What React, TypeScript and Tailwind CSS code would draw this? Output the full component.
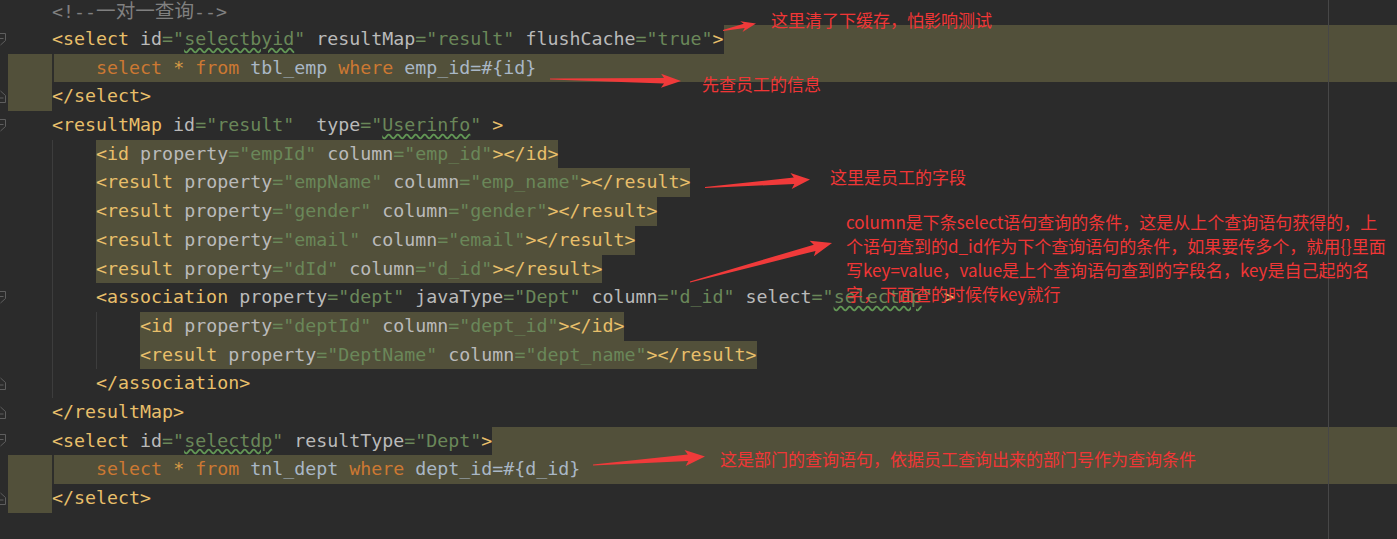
import React from "react";

const TAG = "text-[#e8bf6a]";
const AT = "text-[#bababa]";
const VAL = "text-[#6a8759]";
const KW = "text-[#cc7832]";
const STAR = "text-[#d69a45]";
const TX = "text-[#a9b7c6]";
const CMT = "text-[#808080]";
const HL = "bg-[#52503a]";
const SQ = "underline decoration-wavy decoration-[#629755] underline-offset-[2px]";
const GUIDE = "shadow-[inset_1px_0_0_#3d3d3d]";
const GUIDE_DARK = "shadow-[inset_2px_0_0_#2e2e2b]";

function Fold({ kind }: { kind: "open" | "close" }) {
  return (
    <svg width="8" height="13" viewBox="0 0 8 13" className="block">
      {kind === "open" ? (
        <path d="M0 0.5 H5.5 V7.5 L0.5 12" fill="none" stroke="#5e5e5e" strokeWidth="1" />
      ) : (
        <path d="M0.5 1 L5.5 5.5 V12.5 H0" fill="none" stroke="#5e5e5e" strokeWidth="1" />
      )}
      <path d={kind === "open" ? "M0 5.5 H3.5" : "M0 8 H3.5"} stroke="#5e5e5e" strokeWidth="1" />
    </svg>
  );
}

function Row({
  fold,
  className,
  children,
}: {
  fold?: "open" | "close";
  className?: string;
  children?: React.ReactNode;
}) {
  return (
    <div className="flex h-[28.7px] whitespace-pre">
      <div className="flex w-[8px] shrink-0 items-center">{fold && <Fold kind={fold} />}</div>
      <div className={`flex min-w-0 flex-1 ${className ?? ""}`}>{children}</div>
    </div>
  );
}

function A({ n, v, sq }: { n: string; v: string; sq?: boolean }) {
  return (
    <span>
      <span className={AT}>{n}</span>
      <span className={VAL}>
        ="{sq ? <span className={SQ}>{v}</span> : v}"
      </span>
    </span>
  );
}

const I = () => <span>{"    "}</span>;
const G = () => <span className={GUIDE}>{"    "}</span>;

function ResultLine({ tag, p, c, nested }: { tag: string; p: string; c: string; nested?: boolean }) {
  return (
    <Row>
      <I />
      <G />
      {nested && <G />}
      <span className={HL}>
        <span className={TAG}>{"<" + tag}</span> <A n="property" v={p} /> <A n="column" v={c} />
        <span className={TAG}>{"></" + tag + ">"}</span>
      </span>
    </Row>
  );
}

type P = [number, number];
function arrow(t: P, p: P, h: number, w: number): string {
  const dx = p[0] - t[0];
  const dy = p[1] - t[1];
  const L = Math.hypot(dx, dy);
  const ux = dx / L;
  const uy = dy / L;
  const nx = -uy;
  const ny = ux;
  const s = w * 0.4;
  const bx = p[0] - ux * h;
  const by = p[1] - uy * h;
  const cx = p[0] - ux * (h + 3);
  const cy = p[1] - uy * (h + 3);
  const pts: P[] = [
    [t[0] + nx * 0.5, t[1] + ny * 0.5],
    [bx + nx * s, by + ny * s],
    [cx + nx * w, cy + ny * w],
    [p[0], p[1]],
    [cx - nx * w, cy - ny * w],
    [bx - nx * s, by - ny * s],
    [t[0] - nx * 0.5, t[1] - ny * 0.5],
  ];
  return pts.map((q) => q[0].toFixed(1) + "," + q[1].toFixed(1)).join(" ");
}

const ARROWS: { t: P; p: P; h: number; w: number }[] = [
  { t: [723, 30.5], p: [756, 23.5], h: 12, w: 5.5 },
  { t: [550, 79], p: [681, 81], h: 17, w: 7 },
  { t: [705, 187.5], p: [810, 179.5], h: 16, w: 8 },
  { t: [690, 282], p: [832, 243], h: 18, w: 8 },
  { t: [593, 465], p: [705, 456.5], h: 17, w: 8 },
];

const NOTE =
  "absolute whitespace-nowrap text-[17px] leading-[24px] text-[#f03636] font-['Noto_Sans_CJK_SC','Microsoft_YaHei',sans-serif]";

export default function App() {
  return (
    <div className="relative h-[539px] w-[1397px] overflow-hidden bg-[#2b2b2b]">
      <div className="-mt-[3.7px] font-['DejaVu_Sans_Mono','Noto_Sans_CJK_SC',monospace] text-[18.3px] leading-[28.7px] text-[#a9b7c6]">
        {/* 0 */}
        <Row>
          <I />
          <span className={CMT}>
            {"<!--"}
            <span className="font-['Noto_Sans_CJK_SC',sans-serif] text-[19.6px]">一对一查询</span>
            {"-->"}
          </span>
        </Row>
        {/* 1 */}
        <Row fold="open">
          <I />
          <span className={TAG}>{"<select"}</span>
          <span> </span>
          <A n="id" v="selectbyid" sq />
          <span> </span>
          <A n="resultMap" v="result" />
          <span> </span>
          <A n="flushCache" v="true" />
          <span className={TAG}>{">"}</span>
          <span className={`flex-1 ${HL}`} />
        </Row>
        {/* 2 */}
        <Row className={HL}>
          <I />
          <span className={GUIDE_DARK}>{"    "}</span>
          <span>
            <span className={KW}>select</span> <span className={STAR}>*</span> <span className={KW}>from</span>
            <span className={TX}> tbl_emp </span>
            <span className={KW}>where</span>
            <span className={TX}>{" emp_id=#{id}"}</span>
          </span>
        </Row>
        {/* 3 */}
        <Row fold="close">
          <span className={HL}>{"    "}</span>
          <span className={TAG}>{"</select>"}</span>
        </Row>
        {/* 4 */}
        <Row fold="open">
          <I />
          <span className={TAG}>{"<resultMap"}</span>
          <span> </span>
          <A n="id" v="result" />
          <span>{"  "}</span>
          <A n="type" v="Userinfo" sq />
          <span> </span>
          <span className={TAG}>{">"}</span>
        </Row>
        <ResultLine tag="id" p="empId" c="emp_id" />
        <ResultLine tag="result" p="empName" c="emp_name" />
        <ResultLine tag="result" p="gender" c="gender" />
        <ResultLine tag="result" p="email" c="email" />
        <ResultLine tag="result" p="dId" c="d_id" />
        {/* 10 */}
        <Row fold="open">
          <I />
          <G />
          <span className={TAG}>{"<association"}</span>
          <span> </span>
          <A n="property" v="dept" />
          <span> </span>
          <A n="javaType" v="Dept" />
          <span> </span>
          <A n="column" v="d_id" />
          <span> </span>
          <A n="select" v="selectdp" sq />
          <span> </span>
          <span className={TAG}>{">"}</span>
        </Row>
        <ResultLine tag="id" p="deptId" c="dept_id" nested />
        <ResultLine tag="result" p="DeptName" c="dept_name" nested />
        {/* 13 */}
        <Row fold="close">
          <I />
          <G />
          <span className={TAG}>{"</association>"}</span>
        </Row>
        {/* 14 */}
        <Row fold="close">
          <I />
          <span className={TAG}>{"</resultMap>"}</span>
        </Row>
        {/* 15 */}
        <Row fold="open">
          <I />
          <span className={TAG}>{"<select"}</span>
          <span> </span>
          <A n="id" v="selectdp" sq />
          <span> </span>
          <A n="resultType" v="Dept" />
          <span className={TAG}>{">"}</span>
          <span className={`flex-1 ${HL}`} />
        </Row>
        {/* 16 */}
        <Row className={HL}>
          <I />
          <span className={GUIDE_DARK}>{"    "}</span>
          <span>
            <span className={KW}>select</span> <span className={STAR}>*</span> <span className={KW}>from</span>
            <span className={TX}> tnl_dept </span>
            <span className={KW}>where</span>
            <span className={TX}>{" dept_id=#{d_id}"}</span>
          </span>
        </Row>
        {/* 17 */}
        <Row fold="close">
          <span className={HL}>{"    "}</span>
          <span className={TAG}>{"</select>"}</span>
        </Row>
      </div>

      {/* right margin guide */}
      <div className="absolute left-[1328px] top-0 h-full w-px bg-[#474747]" />

      {/* annotations */}
      <div className={`${NOTE} left-[771px] top-[8px]`}>这里清了下缓存，怕影响测试</div>
      <div className={`${NOTE} left-[702px] top-[72px]`}>先查员工的信息</div>
      <div className={`${NOTE} left-[830px] top-[165px]`}>这里是员工的字段</div>
      <div className={`${NOTE} left-[846px] top-[210px]`}>
        <div>column是下条select语句查询的条件，这是从上个查询语句获得的，上</div>
        <div>个语句查到的d_id作为下个查询语句的条件，如果要传多个，就用{"{}"}里面</div>
        <div>写key=value，value是上个查询语句查到的字段名，key是自己起的名</div>
        <div>字，下面查的时候传key就行</div>
      </div>
      <div className={`${NOTE} left-[720px] top-[447px]`}>
        这是部门的查询语句，依据员工查询出来的部门号作为查询条件
      </div>

      <svg className="pointer-events-none absolute left-0 top-0" width="1397" height="539">
        {ARROWS.map((a, i) => (
          <polygon key={i} points={arrow(a.t, a.p, a.h, a.w)} fill="#f03a3a" />
        ))}
      </svg>
    </div>
  );
}
